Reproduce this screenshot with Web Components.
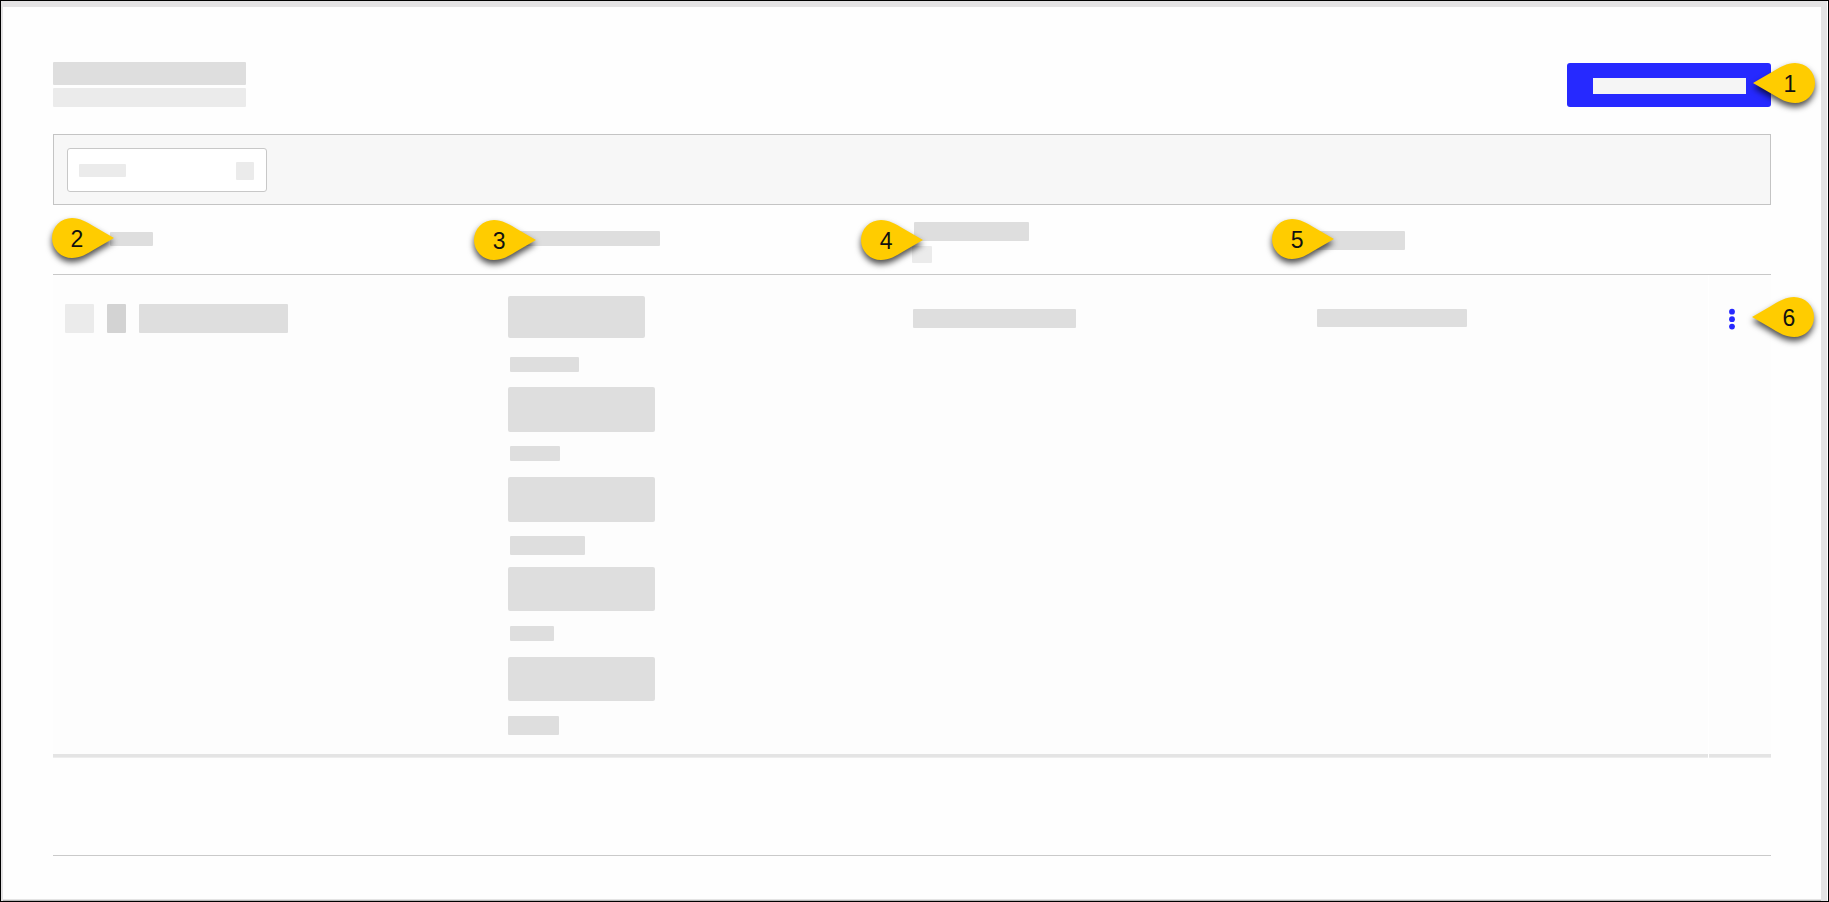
<!DOCTYPE html>
<html lang="en">
<head>
<meta charset="UTF-8">
<meta name="viewport" content="width=device-width, initial-scale=1.0">
<title>Overview</title>
<style>
    * { box-sizing: border-box; }
    body {
        margin: 0;
        background: #000;
        font-family: "Liberation Sans", Arial, sans-serif;
    }
</style>
</head>
<body>
<page-frame>
    <page-header>
        <skeleton-bar w="193" h="23"></skeleton-bar>
        <skeleton-bar w="193" h="19" tone="light"></skeleton-bar>
        <callout-pin slot="pin" side="right">1</callout-pin>
    </page-header>
    <filter-bar></filter-bar>
    <data-table></data-table>
</page-frame>

<script>
/* Placeholder block: w / h in pixels, tone = light | dark, r = corner radius */
class SkeletonBar extends HTMLElement {
    constructor() {
        super();
        this.attachShadow({ mode: 'open' });
    }

    connectedCallback() {
        const tones = { light: '#ebebeb', dark: '#d3d3d3', pale: '#f5f5f5' };
        const tone = tones[this.getAttribute('tone')] || '#dedede';
        this.shadowRoot.innerHTML = `
        <style>
            :host {
                display: block;
                flex: none;
                width: ${this.getAttribute('w')}px;
                height: ${this.getAttribute('h')}px;
                border-radius: ${this.getAttribute('r') || 1}px;
                background: ${tone};
            }
        </style>`;
    }
}

/* Numbered yellow marker, its tip points left (side="right") or right */
class CalloutPin extends HTMLElement {
    constructor() {
        super();
        this.attachShadow({ mode: 'open' });
    }

    connectedCallback() {
        this.shadowRoot.innerHTML = `
        <style>
            :host {
                display: block;
                position: absolute;
                z-index: 2;
                width: 62px;
                height: 40px;
                color: #111;
                font-size: 23px;
                font-weight: 400;
                line-height: 42px;
                pointer-events: none;
            }
            svg {
                position: absolute;
                inset: 0;
                overflow: visible;
                filter: drop-shadow(0 4px 3px rgba(0, 0, 0, 0.7));
            }
            :host([side="right"]) path {
                transform: scaleX(-1);
                transform-origin: 31px 20px;
            }
            span {
                position: relative;
                display: block;
                width: 50px;
                text-align: center;
            }
            :host([side="right"]) span { margin-left: auto; }
        </style>
        <svg width="62" height="40" viewBox="0 0 62 40" aria-hidden="true">
            <path fill="#ffcc00" d="M62 20 L43 9 C35 4 28 0 20 0 A20 20 0 0 0 20 40 C28 40 35 36 43 31 Z"/>
        </svg>
        <span><slot></slot></span>`;
    }
}

class PageFrame extends HTMLElement {
    constructor() {
        super();
        this.attachShadow({ mode: 'open' });
    }

    connectedCallback() {
        this.shadowRoot.innerHTML = `
        <style>
            * { box-sizing: border-box; }
            :host {
                display: flex;
                min-height: 100vh;
                border: 1px solid #000;
                background: #fff;
            }
            .edge {
                display: flex;
                flex: 1;
                margin-right: 1px;
                padding: 6px 6px 0 2px;
                background: #e4e3e4;
            }
            main {
                flex: 1;
                min-width: 0;
                padding: 55px 50px 43px;
                border-bottom: 1px solid #b5b5b5;
                background: #fefefe;
                box-shadow: inset 0 -1px #e4e4e4;
            }
            hr {
                height: 1px;
                margin: 97px 0 0;
                border: 0;
                background: #cacaca;
            }
        </style>
        <div class="edge">
            <main>
                <slot></slot>
                <hr>
            </main>
        </div>`;
    }
}

class PageHeader extends HTMLElement {
    constructor() {
        super();
        this.attachShadow({ mode: 'open' });
    }

    connectedCallback() {
        this.shadowRoot.innerHTML = `
        <style>
            * { box-sizing: border-box; }
            :host {
                display: flex;
                justify-content: space-between;
                align-items: flex-end;
                margin-bottom: 27px;
            }
            .titles {
                display: flex;
                flex-direction: column;
                gap: 3px;
            }
            .action { position: relative; }
            button {
                display: flex;
                align-items: center;
                height: 44px;
                padding: 2px 25px 0 26px;
                border: 0;
                border-radius: 3px;
                background: #2629ff;
                cursor: pointer;
            }
            ::slotted(callout-pin) { top: 0; right: -44px; }
        </style>
        <div class="titles"><slot></slot></div>
        <div class="action">
            <button type="button" aria-label="Create">
                <skeleton-bar w="153" h="16" tone="pale" r="0"></skeleton-bar>
            </button>
            <slot name="pin"></slot>
        </div>`;
    }
}

class FilterBar extends HTMLElement {
    constructor() {
        super();
        this.attachShadow({ mode: 'open' });
    }

    connectedCallback() {
        this.shadowRoot.innerHTML = `
        <style>
            * { box-sizing: border-box; }
            :host {
                display: block;
                box-sizing: border-box;
                padding: 13px 13px 12px;
                border: 1px solid #c4c4c4;
                background: #f7f7f7;
            }
            /* select and its placeholder content share one grid cell */
            label {
                display: grid;
                width: 200px;
                height: 44px;
            }
            select, .content { grid-area: 1 / 1; }
            select {
                appearance: none;
                width: 100%;
                border: 1px solid #c8c8c8;
                border-radius: 3px;
                background: #fff;
            }
            .content {
                display: flex;
                justify-content: space-between;
                align-items: center;
                padding: 1px 13px 0 12px;
                pointer-events: none;
            }
        </style>
        <label>
            <select aria-label="Filter"></select>
            <span class="content">
                <skeleton-bar w="47" h="13" tone="light"></skeleton-bar>
                <skeleton-bar w="18" h="18" tone="light"></skeleton-bar>
            </span>
        </label>`;
    }
}

class DataTable extends HTMLElement {
    constructor() {
        super();
        this.attachShadow({ mode: 'open' });
    }

    // [box width, box height, caption width, caption height]
    static steps = [
        [137, 42, 69, 15],
        [147, 45, 50, 15],
        [147, 45, 75, 19],
        [147, 44, 44, 15],
        [147, 44, 51, 19]
    ];

    connectedCallback() {
        const steps = DataTable.steps.map(([w, h, cw, ch]) => `
            <li>
                <skeleton-bar w="${w}" h="${h}" r="2"></skeleton-bar>
                <skeleton-bar class="caption" w="${cw}" h="${ch}"></skeleton-bar>
            </li>`).join('');

        this.shadowRoot.innerHTML = `
        <style>
            * { box-sizing: border-box; }
            :host { display: block; }
            table {
                width: 100%;
                table-layout: fixed;
                border-spacing: 0;
            }
            .col-name { width: 25.8%; }
            .col-menu { width: 63px; }

            th {
                position: relative;
                height: 70px;
                padding: 26px 12px 0;
                border-bottom: 1px solid #c8c8c8;
                text-align: left;
                vertical-align: top;
            }
            th.name { padding-top: 27px; }
            th.stacked { padding-top: 17px; }
            .after-pin { margin-left: 45px; }
            .sub { margin-top: 5px; }
            .indent { margin-left: 2px; }
            callout-pin { top: 14px; }
            .pin-2 { top: 13px; left: -1px; }
            .pin-3 { top: 15px; left: -22px; }
            .pin-4 { top: 15px; left: -39px; }
            .pin-5 { left: -32px; }

            td {
                padding: 34px 13px 23px;
                background: #fdfdfd;
                box-shadow: inset 0 -1px #ededed, inset 0 -4px #e4e4e4;
                vertical-align: top;
            }
            td.name { padding: 29px 12px 23px; }
            td.steps { padding: 21px 12px 23px; }
            td.menu {
                position: relative;
                padding: 29px 0 0;
                border-left: 1px solid #fff;
            }
            .name-row {
                display: flex;
                gap: 13px;
            }

            ul {
                margin: 0;
                padding: 0;
                list-style: none;
            }
            li {
                display: grid;
                grid-template-rows: 45px auto;
                gap: 14px;
                min-height: 90px;
            }
            li:first-child {
                grid-template-rows: 47px auto;
                min-height: 91px;
            }
            li:last-child { min-height: 0; }
            li:not(:last-child) .caption { margin-left: 2px; }

            button {
                display: block;
                width: 30px;
                height: 30px;
                margin-left: 8px;
                padding: 0;
                border: 0;
                background: none;
                cursor: pointer;
            }
            button svg { display: block; }
            .pin-6 { top: 22px; right: -43px; }
        </style>
        <table>
            <colgroup>
                <col class="col-name">
                <col><col><col>
                <col class="col-menu">
            </colgroup>
            <thead>
                <tr>
                    <th class="name">
                        <skeleton-bar class="after-pin" w="43" h="14"></skeleton-bar>
                        <callout-pin class="pin-2">2</callout-pin>
                    </th>
                    <th>
                        <skeleton-bar w="152" h="15"></skeleton-bar>
                        <callout-pin class="pin-3">3</callout-pin>
                    </th>
                    <th class="stacked">
                        <skeleton-bar class="indent" w="115" h="19"></skeleton-bar>
                        <skeleton-bar class="sub" w="20" h="17" tone="light"></skeleton-bar>
                        <callout-pin class="pin-4">4</callout-pin>
                    </th>
                    <th>
                        <skeleton-bar w="89" h="19"></skeleton-bar>
                        <callout-pin class="pin-5">5</callout-pin>
                    </th>
                    <th></th>
                </tr>
            </thead>
            <tbody>
                <tr>
                    <td class="name">
                        <div class="name-row">
                            <skeleton-bar w="29" h="29" tone="light"></skeleton-bar>
                            <skeleton-bar w="19" h="29" tone="dark"></skeleton-bar>
                            <skeleton-bar w="149" h="29"></skeleton-bar>
                        </div>
                    </td>
                    <td class="steps"><ul>${steps}</ul></td>
                    <td><skeleton-bar w="163" h="19"></skeleton-bar></td>
                    <td><skeleton-bar w="150" h="18"></skeleton-bar></td>
                    <td class="menu">
                        <button type="button" aria-label="More actions">
                            <svg width="30" height="30" viewBox="0 0 30 30" fill="#2629ff" aria-hidden="true">
                                <circle cx="15" cy="7.700" r="2.900"/>
                                <circle cx="15" cy="15.200" r="2.900"/>
                                <circle cx="15" cy="22.600" r="2.900"/>
                            </svg>
                        </button>
                        <callout-pin class="pin-6" side="right">6</callout-pin>
                    </td>
                </tr>
            </tbody>
        </table>`;
    }
}

customElements.define('skeleton-bar', SkeletonBar);
customElements.define('callout-pin', CalloutPin);
customElements.define('page-frame', PageFrame);
customElements.define('page-header', PageHeader);
customElements.define('filter-bar', FilterBar);
customElements.define('data-table', DataTable);
</script>
</body>
</html>
